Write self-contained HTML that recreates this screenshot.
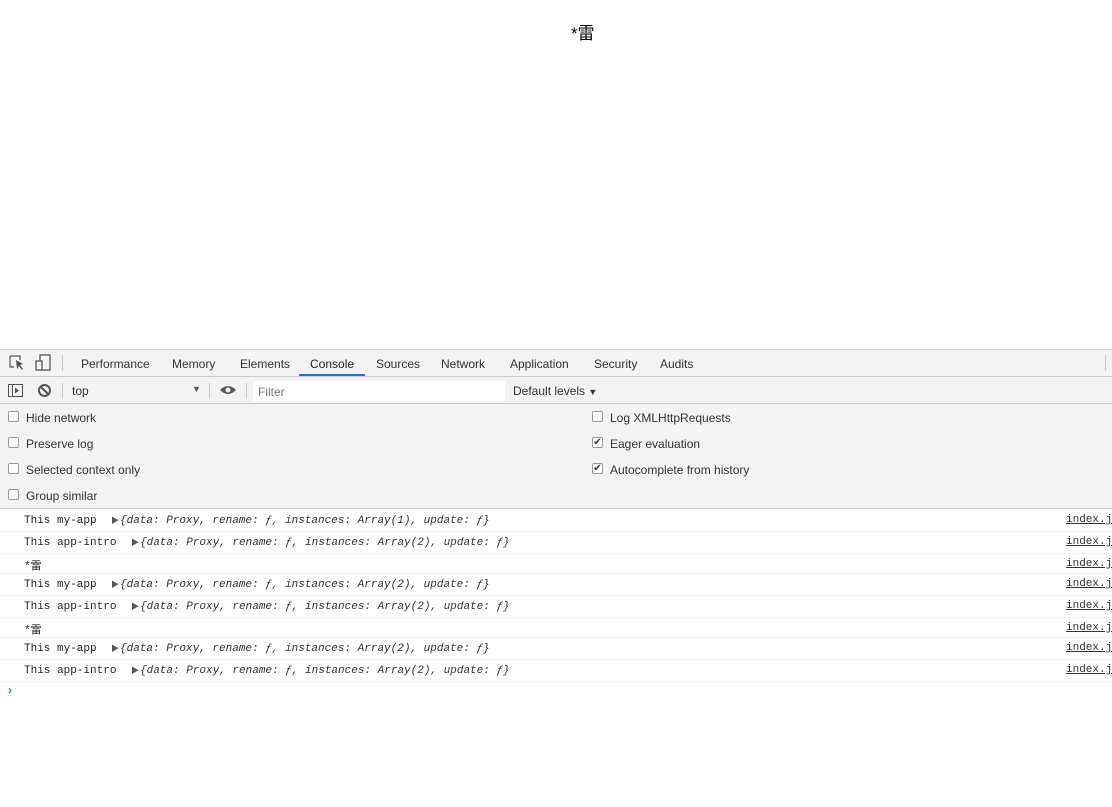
<!DOCTYPE html>
<html><head><meta charset="utf-8"><style>
*{margin:0;padding:0;box-sizing:border-box}
body{width:1112px;height:807px;overflow:hidden;background:#fff;font-family:"Liberation Sans","Noto Sans CJK SC",sans-serif;position:relative}
.a{position:absolute;white-space:nowrap}
.ui{font-size:12px;color:#333}
.mono{font-family:"Liberation Mono","Noto Sans CJK SC",monospace;font-size:11px;color:#222}
.o{font-family:"Liberation Mono",monospace;font-size:11px;color:#333;font-style:italic;position:absolute;white-space:nowrap}
.t{position:absolute;font-size:8px;color:#555}
.cb{position:absolute;width:11px;height:11px;border:1px solid #999;border-radius:2px;background:#fff}
.row{position:absolute;left:0;width:1112px;height:22px;border-bottom:1px solid #f0f0f0}
.lk{left:1066px;text-decoration:underline;color:#333}
</style></head><body>
<div class="a" style="left:571px;top:19px;font-size:17px;color:#000">*雷</div>

<div class="a" style="left:0;top:349px;width:1112px;height:28px;background:#f3f3f3;border-top:1px solid #ccc;border-bottom:1px solid #ccc"></div>
<svg class="a" style="left:9px;top:355px" width="18" height="16"><path d="M1 1h10v4M1 1v11h4" fill="none" stroke="#555" stroke-width="1.2"/><path d="M7 5l7 4-3 1 3 4-1 1-3-4-2 3z" fill="#555"/></svg>
<svg class="a" style="left:35px;top:354px" width="18" height="18"><rect x="5" y="1" width="10" height="15" fill="none" stroke="#555" stroke-width="1.3"/><rect x="1" y="7" width="6" height="9" fill="#f3f3f3" stroke="#555" stroke-width="1.3"/></svg>
<div class="a" style="left:62px;top:355px;width:1px;height:16px;background:#ccc"></div>
<div class="a ui" style="left:81px;top:357px">Performance</div>
<div class="a ui" style="left:172px;top:357px">Memory</div>
<div class="a ui" style="left:240px;top:357px">Elements</div>
<div class="a ui" style="left:310px;top:357px;color:#222">Console</div>
<div class="a" style="left:299px;top:374px;width:66px;height:2px;background:#1a73e8"></div>
<div class="a ui" style="left:376px;top:357px">Sources</div>
<div class="a ui" style="left:441px;top:357px">Network</div>
<div class="a ui" style="left:510px;top:357px">Application</div>
<div class="a ui" style="left:594px;top:357px">Security</div>
<div class="a ui" style="left:660px;top:357px">Audits</div>
<div class="a" style="left:1105px;top:355px;width:1px;height:16px;background:#ccc"></div>

<div class="a" style="left:0;top:377px;width:1112px;height:27px;background:#f3f3f3;border-bottom:1px solid #ccc"></div>
<svg class="a" style="left:8px;top:383px" width="16" height="15"><rect x="0.5" y="1.5" width="14" height="12" fill="none" stroke="#555"/><line x1="4.5" y1="2" x2="4.5" y2="13" stroke="#555"/><path d="M7 4.5l4 3-4 3z" fill="#555"/></svg>
<svg class="a" style="left:37px;top:383px" width="15" height="15"><circle cx="7.5" cy="7.5" r="5.5" fill="none" stroke="#555" stroke-width="2"/><line x1="3.5" y1="3.5" x2="11.5" y2="11.5" stroke="#555" stroke-width="2"/></svg>
<div class="a" style="left:62px;top:383px;width:1px;height:16px;background:#ccc"></div>
<div class="a ui" style="left:72px;top:384px">top</div>
<div class="a" style="left:192px;top:384px;font-size:9px;color:#555">▼</div>
<div class="a" style="left:209px;top:383px;width:1px;height:16px;background:#ccc"></div>
<svg class="a" style="left:219px;top:384px" width="18" height="12"><path d="M1 6Q9-2 17 6Q9 14 1 6z" fill="#555"/><circle cx="9" cy="6" r="2.5" fill="#f3f3f3"/></svg>
<div class="a" style="left:246px;top:383px;width:1px;height:16px;background:#ccc"></div>
<div class="a" style="left:253px;top:381px;width:252px;height:20px;background:#fff"></div>
<div class="a ui" style="left:258px;top:385px;color:#777">Filter</div>
<div class="a ui" style="left:513px;top:384px">Default levels <span style="font-size:9px">▼</span></div>

<div class="a" style="left:0;top:404px;width:1112px;height:105px;background:#f3f3f3;border-bottom:1px solid #ccc"></div>
<div class="cb" style="left:8px;top:411px"></div><div class="a ui" style="left:26px;top:411px">Hide network</div>
<div class="cb" style="left:8px;top:437px"></div><div class="a ui" style="left:26px;top:437px">Preserve log</div>
<div class="cb" style="left:8px;top:463px"></div><div class="a ui" style="left:26px;top:463px">Selected context only</div>
<div class="cb" style="left:8px;top:489px"></div><div class="a ui" style="left:26px;top:489px">Group similar</div>
<div class="cb" style="left:592px;top:411px"></div><div class="a ui" style="left:610px;top:411px">Log XMLHttpRequests</div>
<div class="cb" style="left:592px;top:437px;font-size:10px;line-height:9px;text-align:center;color:#333">✔</div><div class="a ui" style="left:610px;top:437px">Eager evaluation</div>
<div class="cb" style="left:592px;top:463px;font-size:10px;line-height:9px;text-align:center;color:#333">✔</div><div class="a ui" style="left:610px;top:463px">Autocomplete from history</div>

<div class="row" style="top:510px"></div>
<div class="row" style="top:532px"></div>
<div class="row" style="top:553px;height:21px"></div>
<div class="row" style="top:574px"></div>
<div class="row" style="top:596px"></div>
<div class="row" style="top:617px;height:21px"></div>
<div class="row" style="top:638px"></div>
<div class="row" style="top:660px"></div>

<div class="a mono" style="left:24px;top:515px">This my-app</div><div class="t" style="left:111px;top:515px">▶</div><div class="o" style="left:120px;top:515px">{data: Proxy, rename: ƒ, instances: Array(1), update: ƒ}</div>
<div class="a mono" style="left:24px;top:537px">This app-intro</div><div class="t" style="left:131px;top:537px">▶</div><div class="o" style="left:140px;top:537px">{data: Proxy, rename: ƒ, instances: Array(2), update: ƒ}</div>
<div class="a mono" style="left:24px;top:557px">*雷</div>
<div class="a mono" style="left:24px;top:579px">This my-app</div><div class="t" style="left:111px;top:579px">▶</div><div class="o" style="left:120px;top:579px">{data: Proxy, rename: ƒ, instances: Array(2), update: ƒ}</div>
<div class="a mono" style="left:24px;top:601px">This app-intro</div><div class="t" style="left:131px;top:601px">▶</div><div class="o" style="left:140px;top:601px">{data: Proxy, rename: ƒ, instances: Array(2), update: ƒ}</div>
<div class="a mono" style="left:24px;top:621px">*雷</div>
<div class="a mono" style="left:24px;top:643px">This my-app</div><div class="t" style="left:111px;top:643px">▶</div><div class="o" style="left:120px;top:643px">{data: Proxy, rename: ƒ, instances: Array(2), update: ƒ}</div>
<div class="a mono" style="left:24px;top:665px">This app-intro</div><div class="t" style="left:131px;top:665px">▶</div><div class="o" style="left:140px;top:665px">{data: Proxy, rename: ƒ, instances: Array(2), update: ƒ}</div>

<div class="a mono lk" style="top:514px">index.js</div>
<div class="a mono lk" style="top:536px">index.js</div>
<div class="a mono lk" style="top:558px">index.js</div>
<div class="a mono lk" style="top:578px">index.js</div>
<div class="a mono lk" style="top:600px">index.js</div>
<div class="a mono lk" style="top:622px">index.js</div>
<div class="a mono lk" style="top:642px">index.js</div>
<div class="a mono lk" style="top:664px">index.js</div>

<div class="a" style="left:8px;top:683px;font-size:12px;color:#1a73e8;font-weight:bold">›</div>
</body></html>
